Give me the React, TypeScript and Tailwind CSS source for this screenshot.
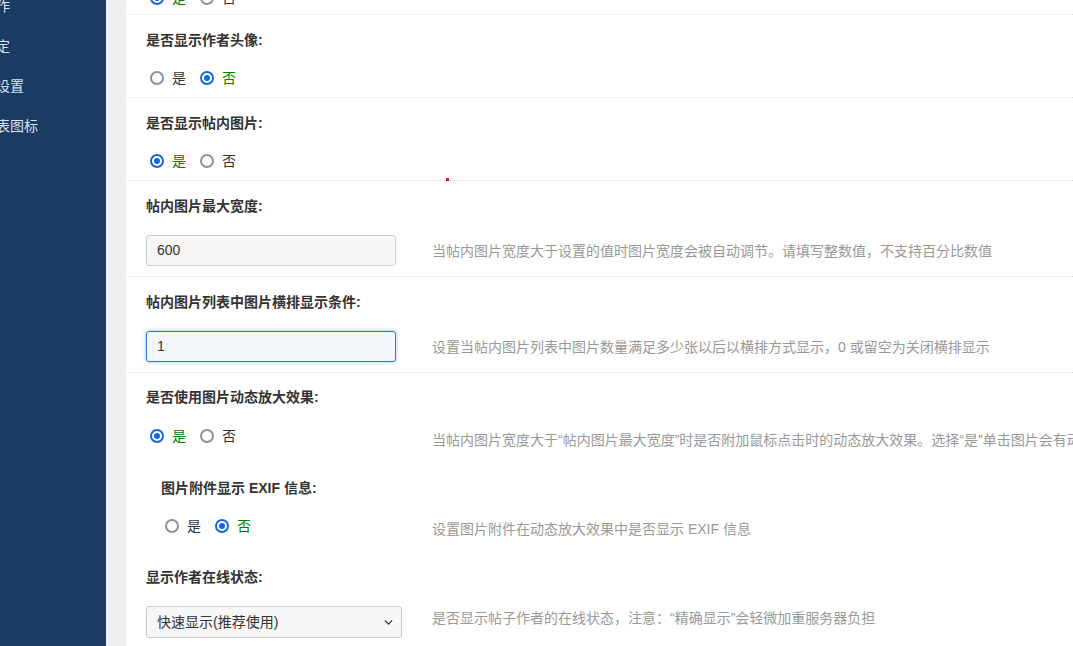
import { ChevronDown } from "lucide-react";

const font = { fontFamily: '"Liberation Sans", "Noto Sans CJK SC", sans-serif' };

const Radio = (props: { checked?: boolean; label: string }) => {
  const { checked, label } = props;
  return (
    <span className="flex items-center gap-[8px]">
      {checked ? (
        <span className="flex h-[14px] w-[14px] items-center justify-center rounded-full border-2 border-[#1369e0] bg-white">
          <span className="h-[6px] w-[6px] rounded-full bg-[#1369e0]" />
        </span>
      ) : (
        <span className="h-[14px] w-[14px] rounded-full border-2 border-[#8f8f9d] bg-white" />
      )}
      <span className={`text-[14px] leading-[20px] ${checked ? "text-[#008000]" : "text-[#333]"}`}>{label}</span>
    </span>
  );
};

const YesNo = (props: { yes: boolean }) => (
  <div className="flex h-[20px] items-center gap-[14px] pl-[4px]">
    <Radio checked={props.yes} label="是" />
    <Radio checked={!props.yes} label="否" />
  </div>
);

const Label = (props: { text: string }) => (
  <div className="h-[18px] text-[14px] font-bold leading-[18px] text-[#333]">{props.text}</div>
);

const Desc = (props: { text: string }) => (
  <div className="whitespace-nowrap text-[14px] leading-[18px] text-[#999]">{props.text}</div>
);

const sideItems = [
  { text: "主题操作", ml: "ml-[-46px]" },
  { text: "帖子锁定", ml: "ml-[-46px]" },
  { text: "附件设置", ml: "ml-[-32px]" },
  { text: "帖子列表图标", ml: "ml-[-46px]" },
];

export default function App() {
  return (
    <div className="flex h-[646px] w-[1073px] overflow-hidden bg-white" style={font}>
      {/* sidebar */}
      <div className="w-[106px] shrink-0 overflow-hidden bg-[#1a3b64]">
        <div className="mt-[-4px] flex flex-col gap-[20px]">
          {sideItems.map((s) => (
            <div key={s.text} className={`${s.ml} whitespace-nowrap text-[14px] leading-[20px] text-[#dbe3ec]`}>
              {s.text}
            </div>
          ))}
        </div>
      </div>
      <div className="w-[20px] shrink-0 bg-[#efefef]" />

      {/* main */}
      <div className="relative min-w-0 flex-1 overflow-hidden">
        <span className="absolute left-[320px] top-[178px] h-[3px] w-[3px] bg-[#e8141a]" />

        <div className="h-[15px] overflow-hidden border-b border-dotted border-[#dedede] pl-[20px]">
          <div className="mt-[-12px]">
            <YesNo yes />
          </div>
        </div>

        <div className="border-b border-dotted border-[#dedede] pb-[9px] pl-[20px] pt-[16px]">
          <Label text="是否显示作者头像:" />
          <div className="mt-[19px]">
            <YesNo yes={false} />
          </div>
        </div>

        <div className="border-b border-dotted border-[#dedede] pb-[9px] pl-[20px] pt-[16px]">
          <Label text="是否显示帖内图片:" />
          <div className="mt-[19px]">
            <YesNo yes />
          </div>
        </div>

        <div className="border-b border-dotted border-[#dedede] pb-[10px] pl-[20px] pt-[16px]">
          <Label text="帖内图片最大宽度:" />
          <div className="mt-[20px] flex items-center">
            <div className="w-[286px] shrink-0">
              <div className="flex h-[31px] w-[250px] items-center rounded-[3px] border border-[#cccccc] bg-[#f7f7f7] pl-[10px] text-[14px] text-[#333]">
                600
              </div>
            </div>
            <Desc text="当帖内图片宽度大于设置的值时图片宽度会被自动调节。请填写整数值，不支持百分比数值" />
          </div>
        </div>

        <div className="border-b border-dotted border-[#dedede] pb-[10px] pl-[20px] pt-[16px]">
          <Label text="帖内图片列表中图片横排显示条件:" />
          <div className="mt-[20px] flex items-center">
            <div className="w-[286px] shrink-0">
              <div className="flex h-[31px] w-[250px] items-center rounded-[3px] border border-[#2f78c8] bg-[#f3f7fc] pl-[10px] text-[14px] text-[#333] shadow-[0_0_4px_rgba(47,120,200,0.45)]">
                1
              </div>
            </div>
            <Desc text="设置当帖内图片列表中图片数量满足多少张以后以横排方式显示，0 或留空为关闭横排显示" />
          </div>
        </div>

        <div className="pl-[20px] pt-[15px]">
          <Label text="是否使用图片动态放大效果:" />
          <div className="mt-[20px] flex items-start">
            <div className="w-[286px] shrink-0">
              <YesNo yes />
            </div>
            <div className="pt-[5px]">
              <Desc text="当帖内图片宽度大于“帖内图片最大宽度”时是否附加鼠标点击时的动态放大效果。选择“是”单击图片会有动态放大效果" />
            </div>
          </div>

          <div className="mt-[30px] pl-[15px]">
            <Label text="图片附件显示 EXIF 信息:" />
            <div className="mt-[19px] flex items-start">
              <div className="w-[271px] shrink-0">
                <YesNo yes={false} />
              </div>
              <div className="pt-[4px]">
                <Desc text="设置图片附件在动态放大效果中是否显示 EXIF 信息" />
              </div>
            </div>
          </div>
        </div>

        <div className="pl-[20px] pt-[30px]">
          <Label text="显示作者在线状态:" />
          <div className="mt-[20px] flex items-start">
            <div className="w-[286px] shrink-0">
              <div className="flex h-[32px] w-[256px] items-center justify-between rounded-[3px] border border-[#cccccc] bg-[#f7f7f7] pl-[10px] pr-[6px] text-[14px] text-[#333]">
                <span>快速显示(推荐使用)</span>
                <ChevronDown size={13} strokeWidth={2.5} className="text-[#333]" />
              </div>
            </div>
            <div className="pt-[3px]">
              <Desc text="是否显示帖子作者的在线状态，注意：“精确显示”会轻微加重服务器负担" />
            </div>
          </div>
        </div>
      </div>
    </div>
  );
}
